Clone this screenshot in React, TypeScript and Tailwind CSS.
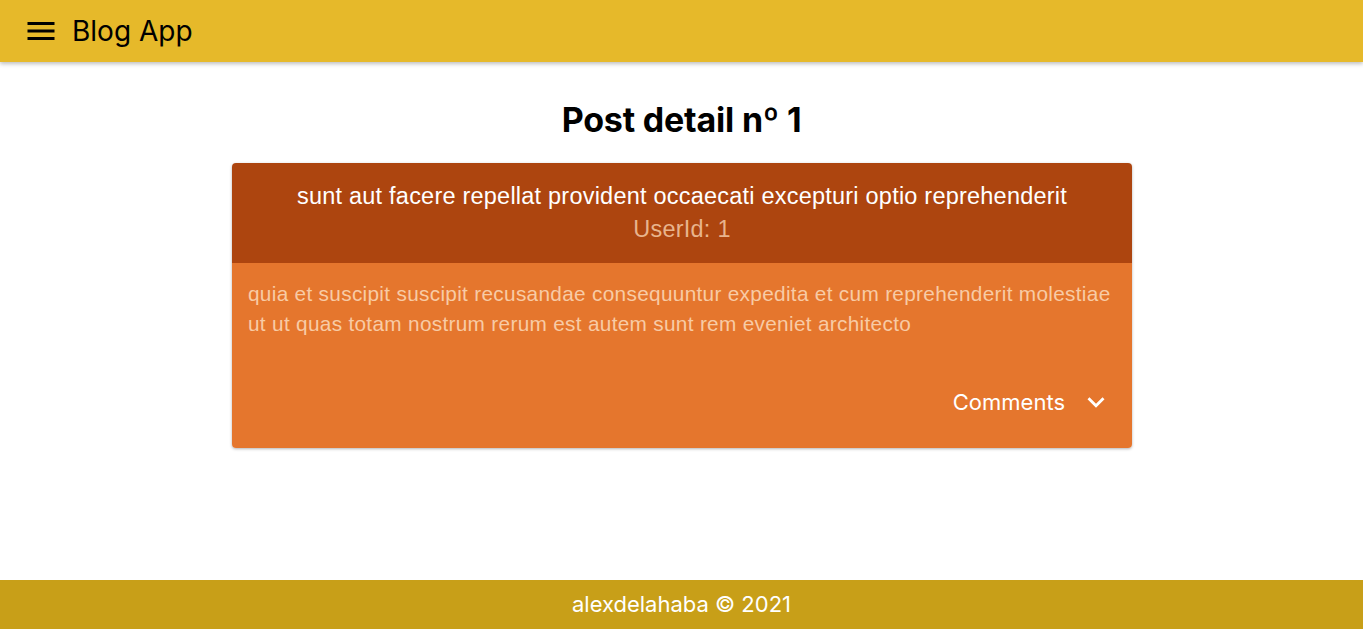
const post = {
    id: 1,
    userId: 1,
    title: "sunt aut facere repellat provident occaecati excepturi optio reprehenderit",
    body: "quia et suscipit suscipit recusandae consequuntur expedita et cum reprehenderit molestiae ut ut quas totam nostrum rerum est autem sunt rem eveniet architecto",
};

function MenuIcon() {
    return (
        <svg width="36" height="36" viewBox="0 0 24 24" fill="currentColor">
            <path d="M3 18h18v-2H3v2zm0-5h18v-2H3v2zm0-7v2h18V6H3z" />
        </svg>
    );
}

function ExpandMoreIcon() {
    return (
        <svg width="34" height="34" viewBox="0 0 24 24" fill="currentColor">
            <path d="M16.59 8.59L12 13.17 7.41 8.59 6 10l6 6 6-6z" />
        </svg>
    );
}

export default function App() {
    return (
        <div className="min-h-screen flex flex-col bg-white font-['Inter',sans-serif]">
            <header className="h-[62px] bg-[#e6b92a] flex items-center px-[23px] gap-[13px] shadow-[0_2px_4px_rgba(0,0,0,0.25)] z-10">
                <MenuIcon />
                <h1 className="text-[28px] text-black leading-none">Blog App</h1>
            </header>

            <main className="flex-1 flex flex-col items-center pt-[38px]">
                <h2 className="text-[34px] font-bold text-black leading-[40px] tracking-[-0.2px]">Post detail nº {post.id}</h2>

                <div className="mt-[23px] ml-[1px] w-[900px] rounded-[4px] overflow-hidden shadow-[0_1px_3px_rgba(0,0,0,0.3)] font-['Liberation_Sans',Arial,sans-serif]">
                    <div className="h-[100px] bg-[#ad450f] flex flex-col items-center justify-center text-center">
                        <p className="text-[23.5px] text-white leading-[33px] tracking-[0.22px]">{post.title}</p>
                        <p className="text-[23.5px] text-[#e8b48d] leading-[33px] tracking-[0.22px]">UserId: {post.userId}</p>
                    </div>
                    <div className="bg-[#e5762d] px-[16px] pt-[16px] pb-[26px]">
                        <p className="text-[20.8px] leading-[30px] text-[#f8cba5] tracking-[0.3px]">{post.body}</p>
                        <div className="flex justify-end items-center mt-[43px] pr-[3px] h-[40px] font-['Inter',sans-serif]">
                            <span className="text-[22px] text-white">Comments</span>
                            <span className="text-white ml-[14px] flex">
                                <ExpandMoreIcon />
                            </span>
                        </div>
                    </div>
                </div>
            </main>

            <footer className="h-[49px] bg-[#c89f18] flex items-center justify-center">
                <span className="text-[22px] text-white">alexdelahaba © 2021</span>
            </footer>
        </div>
    );
}
